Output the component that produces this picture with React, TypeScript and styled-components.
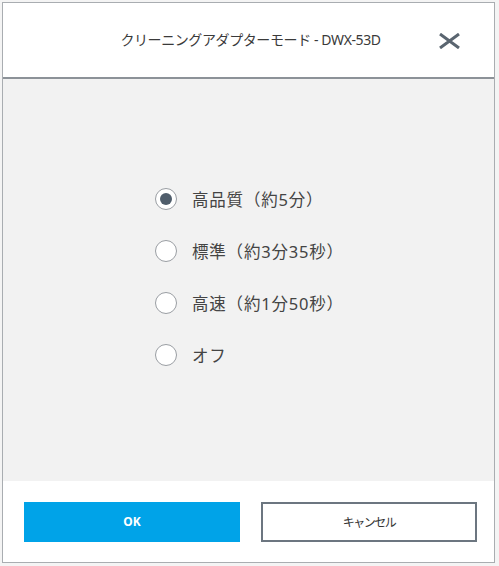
import React, { useState } from 'react';
import styled, { createGlobalStyle } from 'styled-components';

const GlobalStyle = createGlobalStyle`
  html, body {
    margin: 0;
    padding: 0;
    background: #f4f4f4;
  }
  body {
    font-family: "Noto Sans", "Noto Sans CJK JP", sans-serif;
    color: #333;
  }
`;

const Page = styled.div`
  width: 499px;
  height: 566px;
  padding: 2px 4px 3px 2px;
  box-sizing: border-box;
`;

const Dialog = styled.div`
  width: 100%;
  height: 100%;
  box-sizing: border-box;
  border: 1px solid #a9adb1;
  background: #ffffff;
  display: flex;
  flex-direction: column;
`;

const Header = styled.header`
  height: 74px;
  flex: none;
  display: flex;
  align-items: center;
  justify-content: center;
  position: relative;
  border-bottom: 2px solid #8c9298;
`;

const Title = styled.h1`
  margin: 0 0 2px 4px;
  font-size: 14px;
  font-weight: 400;
  color: #3a3a3a;
  letter-spacing: -0.4px;
`;

const CloseButton = styled.button`
  position: absolute;
  right: 33px;
  top: 30px;
  width: 24px;
  height: 16px;
  padding: 0;
  border: none;
  background: transparent;
  cursor: pointer;
  display: flex;
  align-items: center;
  justify-content: center;
`;

const Body = styled.main`
  flex: 1;
  background: #f2f2f2;
  display: flex;
  flex-direction: column;
  justify-content: center;
  padding-left: 152px;
  padding-bottom: 6px;
`;

const OptionList = styled.div`
  display: flex;
  flex-direction: column;
  gap: 30px;
`;

const Option = styled.label`
  display: flex;
  align-items: center;
  gap: 15px;
  height: 22px;
  cursor: pointer;
  font-size: 16.5px;
  letter-spacing: 0.8px;
  color: #444;
`;

const Circle = styled.span<{ checked: boolean }>`
  width: 22px;
  height: 22px;
  box-sizing: border-box;
  border-radius: 50%;
  border: 1.5px solid #9a9ea3;
  background: #ffffff;
  display: flex;
  align-items: center;
  justify-content: center;

  &::after {
    content: '';
    width: 12px;
    height: 12px;
    border-radius: 50%;
    background: #4f5d6b;
    display: ${p => (p.checked ? 'block' : 'none')};
  }
`;

const Footer = styled.footer`
  height: 81px;
  flex: none;
  display: flex;
  align-items: center;
  gap: 21px;
  padding: 0 17px 0 21px;
  box-sizing: border-box;
`;

const ActionButton = styled.button<{ primary?: boolean }>`
  flex: 1;
  height: 40px;
  box-sizing: border-box;
  border: 2px solid ${p => (p.primary ? '#00a3e8' : '#6c7680')};
  background: ${p => (p.primary ? '#00a3e8' : '#ffffff')};
  color: ${p => (p.primary ? '#ffffff' : '#333333')};
  font-family: "Noto Sans", "Noto Sans CJK JP", sans-serif;
  font-size: 12px;
  letter-spacing: ${p => (p.primary ? '0' : '-1.5px')};
  font-weight: ${p => (p.primary ? 700 : 400)};
  cursor: pointer;
`;

const options = ['高品質（約5分）', '標準（約3分35秒）', '高速（約1分50秒）', 'オフ'];

export default function App() {
  const [selected, setSelected] = useState(0);

  return (
    <>
      <GlobalStyle />
      <Page>
        <Dialog>
          <Header>
            <Title>クリーニングアダプターモード - DWX-53D</Title>
            <CloseButton aria-label="close">
              <svg width="23" height="16" viewBox="0 0 23 16">
                <path d="M2 1 L21 15 M21 1 L2 15" stroke="#5a6570" strokeWidth="3" />
              </svg>
            </CloseButton>
          </Header>
          <Body>
            <OptionList>
              {options.map((o, i) => (
                <Option key={o} onClick={() => setSelected(i)}>
                  <Circle checked={selected === i} />
                  {o}
                </Option>
              ))}
            </OptionList>
          </Body>
          <Footer>
            <ActionButton primary>OK</ActionButton>
            <ActionButton>キャンセル</ActionButton>
          </Footer>
        </Dialog>
      </Page>
    </>
  );
}
